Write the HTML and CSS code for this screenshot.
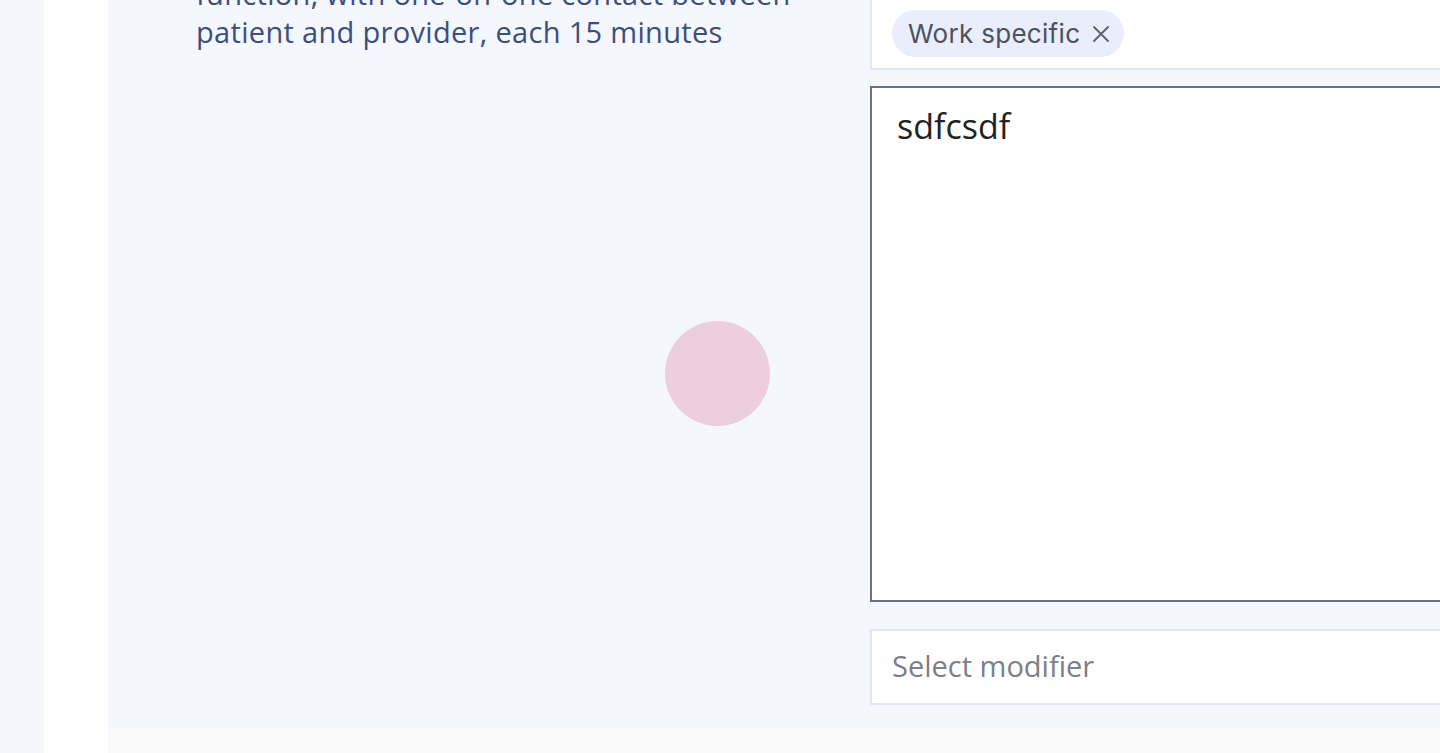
FILE: index.html
```html
<!DOCTYPE html>
<html lang="en">
<head>
<meta charset="utf-8">
<title>Service details</title>
<link rel="stylesheet" href="styles.css">
</head>
<body>
<div class="page">
  <div class="rail"></div>
  <div class="gutter"></div>
  <main class="main">
    <section class="panel">
      <div class="panel-inner">
        <div class="desc-col">
          <p class="desc">function, with one-on-one contact between patient and provider, each 15 minutes</p>
        </div>
        <div class="form-col">
          <div class="tag-box">
            <span class="tag">Work specific
              <svg class="tag-x" width="18" height="18" viewBox="0 0 18 18" aria-hidden="true"><path d="M2 2 L16 16 M16 2 L2 16" stroke="currentColor" stroke-width="1.8" fill="none" stroke-linecap="round"/></svg>
            </span>
          </div>
          <div class="notes">sdfcsdf</div>
          <div class="select">Select modifier</div>
        </div>
      </div>
    </section>
    <div class="footer"></div>
  </main>
  <div class="touch"></div>
</div>
</body>
</html>
```

FILE: styles.css
```css
html, body {
  margin: 0;
  padding: 0;
  height: 100%;
  overflow: hidden;
}
body {
  background: #f4f7fc;
  font-family: "Open Sans", "Liberation Sans", sans-serif;
}
.page {
  display: flex;
  height: 753px;
  width: 1440px;
  overflow: hidden;
  position: relative;
}
.rail {
  width: 44px;
  flex: none;
  background: #f4f7fc;
}
.gutter {
  width: 64px;
  flex: none;
  background: #ffffff;
}
.main {
  flex: 1;
  display: flex;
  flex-direction: column;
  min-width: 0;
}
.panel {
  height: 728px;
  flex: none;
  background: #f4f7fd;
  overflow: hidden;
}
.panel-inner {
  display: flex;
  margin-top: -38px;
  width: 1500px;
}
.footer {
  flex: 1;
  background: #fafafa;
}
.desc-col {
  width: 674px;
  padding-left: 88px;
  flex: none;
}
.desc {
  margin: 0;
  padding-top: 13px;
  font-size: 29px;
  letter-spacing: 0.32px;
  line-height: 38px;
  color: #3c4e7b;
  width: 640px;
}
.form-col {
  display: flex;
  flex-direction: column;
  width: 620px;
}
.tag-box {
  height: 108px;
  box-sizing: border-box;
  background: #fff;
  border: 2px solid #e3e7ee;
  border-right: none;
  display: flex;
  align-items: flex-end;
  padding: 0 0 11px 20px;
}
.tag {
  display: inline-flex;
  align-items: center;
  height: 47px;
  padding: 0 14px 0 16px;
  border-radius: 24px;
  background: #e9edfc;
  color: #4b5260;
  font-family: Inter, "Liberation Sans", sans-serif;
  font-size: 26px;
  letter-spacing: 0.3px;
  gap: 12px;
}
.tag-x {
  color: #5a6070;
  flex: none;
}
.notes {
  margin-top: 16px;
  height: 516px;
  box-sizing: border-box;
  background: #fff;
  border: 2px solid #687086;
  border-right: none;
  padding: 16px 25px;
  font-size: 34px;
  line-height: 44px;
  color: #222222;
}
.select {
  margin-top: 27px;
  height: 76px;
  box-sizing: border-box;
  background: #fff;
  border: 2px solid #e2e7ef;
  border-right: none;
  display: flex;
  align-items: center;
  padding: 0 0 4px 20px;
  font-size: 29px;
  color: #7b808b;
}
.touch {
  position: absolute;
  left: 665px;
  top: 321px;
  width: 105px;
  height: 105px;
  border-radius: 50%;
  background: #edcde0;
}
```
